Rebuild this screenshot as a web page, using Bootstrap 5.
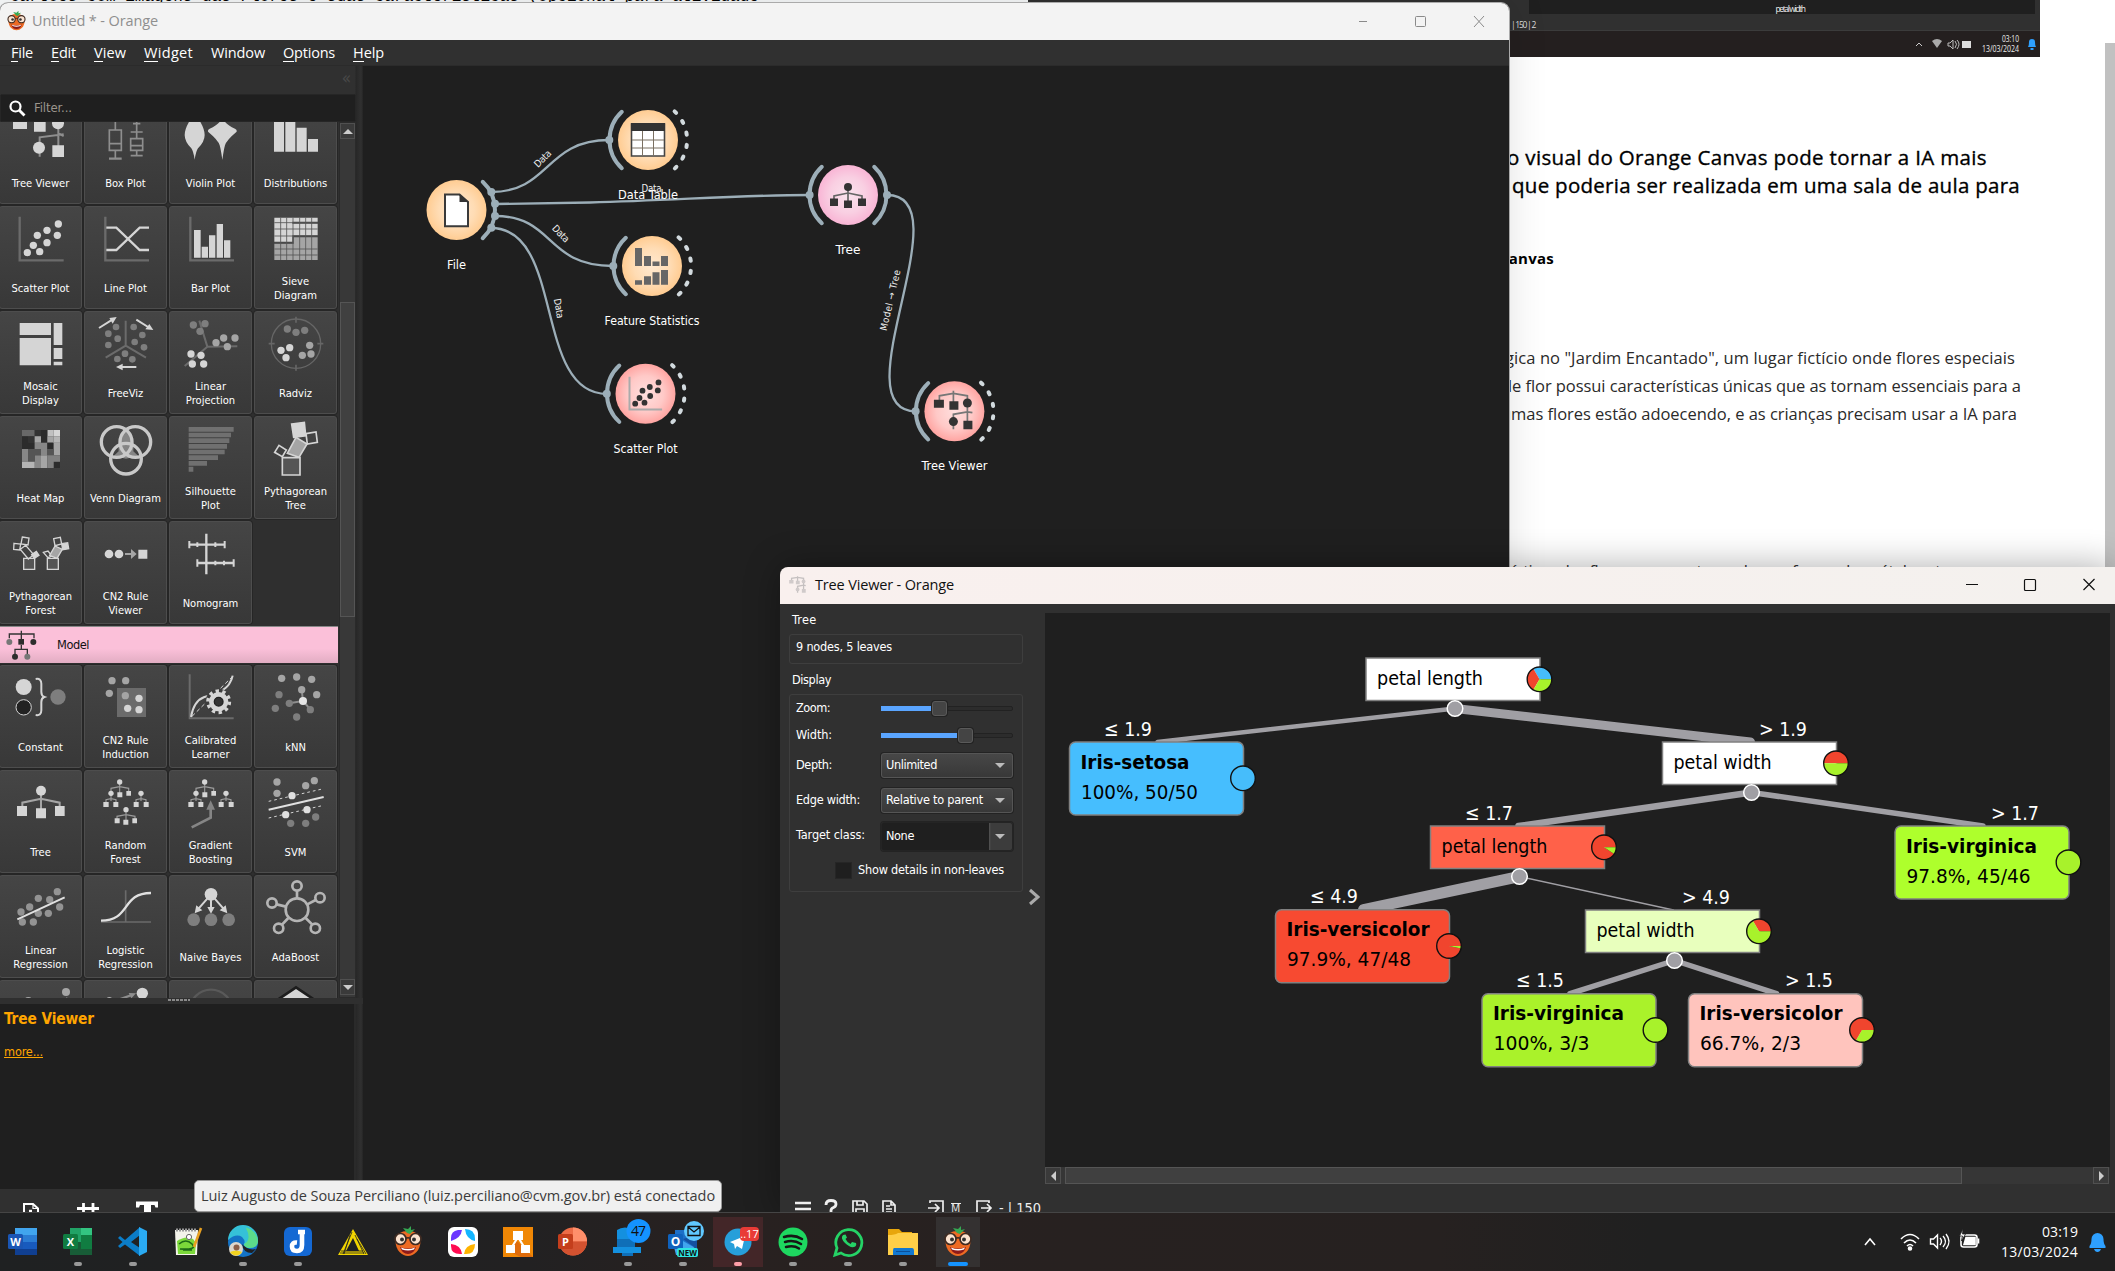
<!DOCTYPE html>
<html lang="pt-BR">
<head>
<meta charset="utf-8">
<meta name="viewport" content="width=device-width, initial-scale=1">
<title>Orange</title>
<link href="https://cdn.jsdelivr.net/npm/bootstrap@5.3.0/dist/css/bootstrap.min.css" rel="stylesheet">
<style>
:root{--tah:"DejaVu Sans Condensed","DejaVu Sans",sans-serif;--seg:"Open Sans","Noto Sans",sans-serif}
html,body{height:1271px;width:2115px;overflow:hidden}
body{background:#fff;font-family:var(--tah);font-size:12px;color:#fff;font-stretch:condensed;position:relative}
svg{display:block;flex:none}
[data-fit]{white-space:nowrap;display:inline-block}
/* document behind the windows */
.doc-page{height:1271px;color:#111;font-family:var(--seg);font-stretch:normal;position:relative}
.doc-top{height:57px}
.doc-left{width:1028px;height:57px;background:#f7f9fa;font:16px/16px "Liberation Mono",monospace;color:#000;padding:0 0 0 10px}
.doc-left span{display:block;margin-top:-11px;white-space:pre}
.doc-shot{width:1012px;background:#241f1f;font-size:8.500px;position:relative;color:#ddd}
.doc-shot .pane{height:31px;background:#303030;border-bottom:1px solid #3b3b3b;position:relative}
.doc-shot .pane i{display:block;height:14px;width:506px;margin-left:501px;background:#1f1f1f;text-align:center;font-style:normal;line-height:17px;color:#eee;padding-left:16px}
.doc-shot .pane i span{line-height:17px}
.doc-text{padding-left:1499px}
.doc-text div{line-height:28px;white-space:nowrap}
.doc-h{margin-top:86px;font-size:20.5px;font-weight:500;color:#000;-webkit-text-stroke:.35px #000}
.doc-b{margin-top:45px;font-size:15px;font-weight:700;color:#000}
.doc-p{margin-top:72px;font-size:16.5px;font-weight:400;color:#2a2a2a}
.doc-l{margin-top:129px;font-size:16.5px;font-weight:400;color:#333}
.doc-scroll{position:absolute;right:0;top:43px;width:10px;height:524px;background:#c1c1c1}
/* windows */
.win-main{position:absolute;left:0;top:3px;width:1509px;height:1209px;background:#303030;border-radius:8px 8px 0 0;overflow:hidden;box-shadow:0 0 0 1px #aaa,0 0 40px rgba(0,0,0,.12)}
.win-title{height:37px;background:#f3f3f3;color:#8f8f8f;font-family:var(--seg);font-size:14.5px;font-stretch:normal}
.win-menu{height:26px;background:#303030;font-family:var(--seg);font-size:14.5px;font-stretch:normal;line-height:25px;border-bottom:1px solid #2b2b2b}
.win-menu u{text-decoration:none;box-shadow:inset 0 -1px 0 #fff;display:inline-block;line-height:18px}
.side{width:363px;background:linear-gradient(90deg,#303030 355px,#272727 356px,#303030 361px,#252525)}
.side-head{height:28px;color:#484848;font-size:17px}
.side-filter{height:28px;width:356px;background:#1f1f1f;border:1px solid #262626;border-radius:2px;color:#9b958c;font-size:13px}
.tilewrap{height:876px;width:338px;overflow:hidden;background:#2f2f2f}
.tiles{display:flex;flex-wrap:wrap;gap:2px;width:340px;margin-left:-1px}
.tile{width:83px;height:103px;border:1px solid #4d4d4d;border-radius:3px;background:linear-gradient(#454545,#383838);box-shadow:0 0 0 1px #262626;overflow:hidden}
.tile svg{width:83px;height:62px;margin:-1px 0 0 -1px}
.tile p{margin:0;height:41px;display:flex;align-items:center;justify-content:center;text-align:center;line-height:14px;font-size:11.1px;color:#fff;white-space:pre-line}
.cat{height:37px;background:linear-gradient(#fbc0d9 60%,#e2adc3);border-top:1px solid #888;color:#111;font-size:12.7px;margin:2px 0 2px}
.vbar{width:17px;margin-left:1px;background:#383838;border:1px solid #2a2a2a}
.vbtn{height:16px;border:1px solid #505050;background:#3a3a3a;display:flex;align-items:center;justify-content:center}
.vthumb{margin-top:163px;height:315px;border:1px solid #555;background:#404040}
.split6{height:6px;background:#2f2f2f}
.descr{height:185px;width:356px;background:#1f1f1f;border-right:2px solid #2a2a2a;color:#ffa500;padding:5px 4px;}
.descr b{display:block;font-size:15.3px;line-height:20px}
.descr a{display:block;font-size:12.6px;margin-top:13px;color:#ffa500;line-height:19px}
.descr a span{text-decoration:underline}
.side-tools{height:23px;overflow:hidden;background:#303030}
.canvas-area{background:#1f1f1f;width:1146px;height:1146px}
.win-tree{position:absolute;left:780px;top:567px;width:1335px;height:645px;background:#303030;border-radius:8px 0 0 0;overflow:hidden;}
.tree-shadow{position:absolute;left:780px;top:567px;width:1335px;height:645px;border-radius:8px 8px 0 0;box-shadow:0 0 36px rgba(0,0,0,.33)}
.win-tree .win-title{background:linear-gradient(90deg,#f9f0ee,#f4f1ee);color:#111}
.ctl{width:265px;padding:9px 0 0 9px;font-size:12.6px;position:relative}
.ctl .lbl{line-height:21px;padding-left:3px}
.gbox{width:234px;border:1px solid #3e3e3e;border-radius:3px;padding-left:6px}
.frow{display:flex;align-items:center}
.frow>span{width:85px;white-space:nowrap}
.sldr{width:132px;height:16px;display:flex;align-items:center}
.sldr i{height:5px;background:#5aa5ff}
.sldr b{width:15px;height:15px;border:1px solid #5a5a5a;background:#444;border-radius:3px;box-shadow:0 0 0 1px #222}
.sldr em{flex:1;height:5px;background:#2c2c2c;border:1px solid #222;border-radius:2px}
.cmb{width:132px;border:1px solid #555;border-radius:3px;background:linear-gradient(#474747,#383838);box-shadow:0 0 0 1px #232323;display:flex;align-items:center;justify-content:space-between;padding:0 7px 1px 4px}
.tri{width:0;height:0;border:5px solid transparent;border-top:5px solid #bbb;border-bottom:0}
.chk{width:17px;height:17px;background:#1f1f1f;border:1px solid #262626}
.hbar{height:17px;background:#363636;display:flex;width:1064px}
.hbar .hb{width:16px;border:1px solid #505050;background:#3a3a3a;display:flex;align-items:center;justify-content:center}
.hthumb{width:897px;margin-left:4px;border:1px solid #555;background:#404040}
.tray-tip{position:absolute;left:194px;top:1180px;width:528px;height:32px;background:#f0f0f0;border:1px solid #999;border-radius:5px;color:#3b3b3b;font:400 14.5px/29px var(--seg);padding-left:6px}
/* taskbar */
.tbar{position:absolute;left:0;top:1212px;width:2115px;height:59px;background:linear-gradient(90deg,#1f2122,#222122 25%,#282120 34%,#262120 68%,#202020 78%,#202020);border-top:1px solid #454545;font-family:var(--seg);font-stretch:normal}
.tcell{width:55px;height:58px;display:flex;flex-direction:column;align-items:center;padding-top:4px;position:relative}
.tcell>svg{width:50px;height:50px}
.tcell::after{content:"";position:absolute;top:49px;width:8px;height:4px;border-radius:2px;background:#999;display:none}
.tcell.on::after{display:block}
.tcell.red{background:linear-gradient(#432628,#432628) center 4px/50px 50px no-repeat}
.tcell.red::after{background:#ff9fa8}
.tcell.act{background:linear-gradient(#343131,#343131) center 4px/44px 50px no-repeat}
.tcell.act::after{width:20px;background:#1593ff}
.clock{font-size:14px;line-height:20px;text-align:right}
</style>
</head>
<body>

<div class="doc-page">
  <div class="doc-top d-flex">
    <div class="doc-left"><span>Cartões com imagens das Flores e suas características (opcional para atividade</span></div>
    <div class="doc-shot">
      <div class="pane"><i><span data-fit="29">petal width</span></i><div style="padding-left:483px;line-height:22px"><span data-fit="24">| 150 | 2</span></div></div>
      <div class="d-flex justify-content-end align-items-center" style="height:26px;padding-right:4px;gap:5px;line-height:9.5px">
        <svg width="111" height="24" viewBox="-3 -2 111 24"><path d="M1 12l3-3 3 3" fill="none" stroke="#ccc"/><path d="M17 7q5-4 10 0l-5 7z" fill="#aaa"/><path d="M33 9h2l3-3v9l-3-3h-2zM40 7q3 3 0 7M42 6q4 4 0 9" fill="none" stroke="#bbb"/><rect x="47" y="7" width="9" height="7" fill="#ddd"/><text x="104" y="8" font-size="8.500" fill="#eee" text-anchor="end" textLength="17" lengthAdjust="spacingAndGlyphs">03:10</text><text x="104" y="18" font-size="8.500" fill="#eee" text-anchor="end" textLength="37" lengthAdjust="spacingAndGlyphs">13/03/2024</text></svg>
        <svg width="8" height="12" viewBox="0 0 8 12"><path d="M0 9q1-1 1-5a3 3 0 016 0q0 4 1 5zM2.500 10h3v2h-3z" fill="#2ea0ff"/></svg>
      </div>
    </div>
  </div>
  <div class="doc-text">
    <div class="doc-h"><span data-fit="480" class="ms-2">o visual do Orange Canvas pode tornar a IA mais</span><br><span data-fit="508" style="margin-left:13px">que poderia ser realizada em uma sala de aula para</span></div>
    <div class="doc-b"><span data-fit="55">Canvas</span></div>
    <div class="doc-p"><span data-fit="510" style="margin-left:6px">gica no "Jardim Encantado", um lugar fictício onde flores especiais</span><br><span data-fit="519" style="margin-left:3px">de flor possui características únicas que as tornam essenciais para a</span><br><span data-fit="516" style="margin-left:2px">umas flores estão adoecendo, e as crianças precisam usar a IA para</span></div>
    <div class="doc-l"><span data-fit="440" style="margin-left:13px">ísticas das flores, como o tamanho e a forma das pétalas etc.</span></div>
  </div>
  <div class="doc-scroll"></div>
</div>

<!-- Orange main window -->
<div class="win-main">
  <div class="win-title d-flex align-items-center">
    <svg width="21" height="21" viewBox="9 8 32 32" style="margin:-2px 0 0 6px"><use href="#orange"/></svg>
    <span data-fit="126" style="margin:-2px 0 0 5px">Untitled * - Orange</span>
    <svg class="ms-auto" width="150" height="20" viewBox="0 0 150 20" style="margin-top:-2px" fill="none" stroke="#8a8a8a"><path d="M-3 10.500h11M115 5l10 11M125 5l-10 11"/><rect x="56.500" y="5.500" width="10" height="10" rx="1"/></svg>
  </div>
  <div class="win-menu d-flex">
    <span data-fit="22" style="margin-left:11px"><u>F</u>ile</span><span data-fit="25" style="margin-left:18px"><u>E</u>dit</span><span data-fit="32" style="margin-left:18px"><u>V</u>iew</span><span data-fit="49" style="margin-left:18px"><u>W</u>idget</span><span data-fit="54" style="margin-left:18px">Window</span><span data-fit="52" style="margin-left:18px"><u>O</u>ptions</span><span data-fit="31" style="margin-left:18px"><u>H</u>elp</span>
  </div>
  <div class="d-flex">
    <div class="side">
      <div class="side-head d-flex justify-content-end" style="padding-right:12px">«</div>
      <div class="side-filter d-flex align-items-center">
        <svg width="17" height="17" viewBox="0 0 17 17" style="margin-left:8px"><circle cx="6.500" cy="6.500" r="5" fill="none" stroke="#fff" stroke-width="2.200"/><path d="M10 10l5.500 5.500" stroke="#fff" stroke-width="2.800"/></svg>
        <span data-fit="38" style="margin-left:8px">Filter...</span>
      </div>
      <div class="d-flex">
      <div class="tilewrap">
        <div class="tiles" style="margin-top:-21px">
          <div class="tile"><svg viewBox="-3 303 249 186" fill="#d5d5d5"><g fill="none" stroke="#8e8e8e" stroke-width="6"><path d="M175 380v60M119 470v-58l72-9M175 400l16 8"/></g><path d="M39 350h42v37H39zM102 355h35v40h-35zM157 436h35v35h-35z"/><circle cx="174" cy="370" r="18"/><circle cx="117" cy="443" r="18"/></svg><p>Tree Viewer</p></div>
          <div class="tile"><svg viewBox="252 303 249 186" fill="none" stroke="#8e8e8e" stroke-width="5"><path d="M346 350v40M346 452v24M410 365v50M410 452v16M399 371h22"/><path d="M328 390h36v61h-36zM328 431h36M392 416h36v35h-36zM392 437h36M392 396h36M392 467h36" /><path d="M327 476h38" stroke-width="7"/></svg><p>Box Plot</p></div>
          <div class="tile"><svg viewBox="507 303 249 186" fill="#d5d5d5"><path d="M584 340q30 40 30 65 0 20-20 40-6 8-10 34-4-26-10-34-20-20-20-40 0-25 30-65zM667 350q5 22 38 36 8 5 4 10-30 25-34 40-4 14-8 44-4-30-8-44-4-15-34-40-4-5 4-10 33-14 38-36z"/></svg><p>Violin Plot</p></div>
          <div class="tile"><svg viewBox="762 303 249 186" fill="#d5d5d5"><path d="M822 340h30v115h-30zM856 350h30v105h-30zM890 383h30v72h-30zM924 417h30v38h-30z"/></svg><p>Distributions</p></div>

          <div class="tile"><svg viewBox="-3 618 249 186"><path d="M59 650v131h132" fill="none" stroke="#6b6b6b" stroke-width="7"/><g fill="#d5d5d5"><circle cx="175" cy="672" r="11"/><circle cx="141" cy="691" r="11"/><circle cx="112" cy="706" r="11"/><circle cx="172" cy="706" r="11"/><circle cx="141" cy="728" r="11"/><circle cx="100" cy="736" r="11"/><circle cx="119" cy="755" r="11"/><circle cx="82" cy="758" r="11"/></g></svg><p>Scatter Plot</p></div>
          <div class="tile"><svg viewBox="252 618 249 186" fill="none" stroke-width="7"><path d="M316 650v131h131" stroke="#6b6b6b"/><path d="M319 683h30l70 67h28M319 750h30l70-67h28" stroke="#d5d5d5"/></svg><p>Line Plot</p></div>
          <div class="tile"><svg viewBox="507 618 249 186"><path d="M571 650v131h131" stroke="#6b6b6b" stroke-width="7" fill="none"/><path fill="#d5d5d5" d="M582 690h20v83h-20zM605 740h19v33h-19zM627 706h19v67h-19zM650 672h19v101h-19zM672 721h19v52h-19z"/></svg><p>Bar Plot</p></div>
          <div class="tile"><svg viewBox="762 618 249 186"><path fill="#d5d5d5" d="M823 653h130v12H823zM823 671h130v35H823zM823 665h54v60h-54z"/><path fill="#a5a5a5" d="M881 712h72v68h-72zM823 731h58v49h-58z"/><path d="M842 653v127M860 653v127M879 653v127M899 653v127M917 653v127M935 653v127M823 668h130M823 687h130M823 708h130M823 729h58M823 747h130M823 765h130" stroke="#555" stroke-width="2.500"/></svg><p>Sieve
Diagram</p></div>

          <div class="tile"><svg viewBox="-3 933 249 186" fill="#d5d5d5"><path d="M59 969h94v36H59zM161 969h26v66h-26zM59 1014h94v82H59zM161 1044h26v33h-26zM161 1085h26v11h-26z"/></svg><p>Mosaic
Display</p></div>
          <div class="tile"><svg viewBox="252 933 249 186"><path d="M377 962v75l-60 36M377 1037l61 36" fill="none" stroke="#6b6b6b" stroke-width="6"/><g fill="#7e7e7e"><circle cx="348" cy="981" r="10"/><circle cx="325" cy="1001" r="10"/><circle cx="353" cy="1016" r="10"/><circle cx="325" cy="1035" r="10"/><circle cx="401" cy="981" r="10"/><circle cx="427" cy="1005" r="10"/><circle cx="404" cy="1026" r="10"/><circle cx="432" cy="1042" r="10"/><circle cx="375" cy="1061" r="10"/><circle cx="352" cy="1077" r="10"/><circle cx="397" cy="1078" r="10"/></g><path d="M297 984l40-25M409 959l40 25M409 1101h-45" stroke="#d5d5d5" stroke-width="6"/><path fill="#d5d5d5" d="M350 951l-12 20-10-17zM460 990l-24-2 12-16zM348 1101l20-10v20z"/></svg><p>FreeViz</p></div>
          <div class="tile"><svg viewBox="507 933 249 186"><path d="M598 962l24 78 90-1M622 1040l-68 58" fill="none" stroke="#6b6b6b" stroke-width="6"/><g fill="#7e7e7e"><circle cx="580" cy="975" r="11"/><circle cx="615" cy="971" r="11"/><circle cx="600" cy="994" r="11"/></g><g fill="#a5a5a5"><circle cx="671" cy="1014" r="11"/><circle cx="705" cy="1014" r="11"/><circle cx="648" cy="1028" r="11"/><circle cx="682" cy="1040" r="11"/></g><g fill="#d5d5d5"><circle cx="573" cy="1062" r="11"/><circle cx="603" cy="1066" r="11"/><circle cx="577" cy="1092" r="11"/><circle cx="611" cy="1092" r="11"/></g></svg><p>Linear
Projection</p></div>
          <div class="tile"><svg viewBox="762 933 249 186"><g fill="none" stroke="#666" stroke-width="4"><circle cx="888" cy="1031" r="74"/><path d="M888 950v18M888 1094v18M806 1031h18M952 1031h18" stroke-width="5"/></g><g fill="#7e7e7e"><circle cx="862" cy="987" r="11"/><circle cx="888" cy="997" r="11"/><circle cx="914" cy="991" r="11"/></g><g fill="#a5a5a5"><circle cx="929" cy="1036" r="11"/><circle cx="933" cy="1062" r="11"/><circle cx="907" cy="1066" r="11"/></g><g fill="#d5d5d5"><circle cx="869" cy="1043" r="11"/><circle cx="843" cy="1051" r="11"/><circle cx="858" cy="1073" r="11"/></g></svg><p>Radviz</p></div>

          <div class="tile"><svg viewBox="-3 18 249 186"><path d="M66 60h38v19H66z" fill="#686868"/><path d="M104 60h19v19h-19zM85 79h19v19H85z" fill="#333"/><path d="M142 60h19v19h-19z" fill="#c0c0c0"/><path d="M161 60h19v19h-19z" fill="#d5d5d5"/><path d="M66 79h19v38H66zM123 60h19v19h-19zM123 79h19v19h-19zM85 98h19v19H85zM161 155h19v19h-19z" fill="#2c2c2c"/><path d="M104 79h19v19h-19zM142 79h19v19h-19zM161 98h19v38h-19zM123 136h19v38h-19z" fill="#a5a5a5"/><path d="M104 98h38v19h-38zM66 117h19v38H66zM123 117h19v19h-19zM104 136h19v38h-19z" fill="#878787"/><path d="M85 117h38v19H85zM142 98h19v38h-19zM85 136h19v19H85z" fill="#555"/><path d="M85 155h19v19H85zM161 79h19v19h-19zM66 155h19v19H66z" fill="#b5b5b5"/><path d="M142 136h19v38h-19zM161 136h19v19h-19z" fill="#808080"/><path d="M142 98h17v19h-17z" fill="#2a2a2a"/></svg><p>Heat Map</p></div>
          <div class="tile"><svg viewBox="252 18 249 186"><path d="M378 54q28 32 22 70l15 14-37 8-37-8 15-14q-6-40 22-70z" fill="#858585"/><g fill="none" stroke="#c9c9c9" stroke-width="10"><circle cx="350" cy="96" r="46"/><circle cx="406" cy="96" r="46"/><circle cx="378" cy="146" r="46"/></g></svg><p>Venn Diagram</p></div>
          <div class="tile"><svg viewBox="507 18 249 186" fill="#707070"><path d="M566 51h135v14H566zM566 68h127v14H566zM566 85h122v14H566zM566 102h115v14H566zM566 119h108v14H566zM566 136h88v14h-88zM566 153h55v14h-55zM566 170h14v15h-14z"/></svg><p>Silhouette
Plot</p></div>
          <div class="tile"><svg viewBox="762 18 249 186" stroke="#d5d5d5" stroke-width="5" fill="none"><path fill="#555" d="M847 143h53v52h-53z"/><path fill="#a5a5a5" d="M862 130l26-48 33 20-24 40z"/><path fill="#d5d5d5" d="M875 42l38-5 4 40-36 5z"/><path d="M918 71l30-5 4 31-30 5zM837 106l22 14-12 20-23-13z"/></svg><p>Pythagorean
Tree</p></div>

          <div class="tile"><svg viewBox="-3 333 249 186" stroke="#d5d5d5" stroke-width="4" fill="none"><path fill="#555" d="M71 445h33v33H71zM142 445h33v33h-33z"/><path d="M61 418l16-12 24 28-16 13zM67 381l20 3-3 21-21-3zM42 400l20 2-3 18-18-2zM130 427l14-4 12 15-12 5z"/><path fill="#d5d5d5" d="M95 434l14-10 8 12-14 9zM185 401l18-3 3 18-18 3z"/><path fill="#a5a5a5" d="M149 436l16-28 22 10-16 27z"/><path d="M161 386l20-4 4 20-20 5z"/></svg><p>Pythagorean
Forest</p></div>
          <div class="tile"><svg viewBox="252 333 249 186"><g fill="#d5d5d5"><circle cx="327" cy="432" r="13"/><circle cx="357" cy="432" r="13"/><path d="M415 419h27v27h-27z"/></g><path d="M375 429h18v-12l17 15-17 15v-12h-18z" fill="#a5a5a5"/></svg><p>CN2 Rule
Viewer</p></div>
          <div class="tile"><svg viewBox="507 333 249 186" stroke="#d5d5d5" stroke-width="7" fill="none"><path d="M619 371v122M568 404h106M592 459h109"/><path d="M568 393v22M674 393v22M592 448v22M701 448v22M592 397v14M646 397v14M646 452v14M672 452v14" stroke-width="6"/></svg><p>Nomogram</p></div>
        </div>
        <div class="cat d-flex align-items-center">
          <svg width="32" height="32" viewBox="16 652 96 96" style="margin-left:5px"><path d="M29 680v-13h74v13M65 657v25M65 700v13M46 728v-15h37v15" fill="none" stroke="#333" stroke-width="4"/><g fill="#2d2d2d"><path d="M56 682h17v17H56z"/><circle cx="101" cy="691" r="9"/><circle cx="46" cy="735" r="9"/></g><g fill="#777"><circle cx="29" cy="691" r="9"/><circle cx="83" cy="735" r="9"/></g></svg>
          <span data-fit="32" style="margin-left:20px">Model</span>
        </div>
        <div class="tiles">
          <div class="tile"><svg viewBox="-3 762 249 186"><circle cx="71" cy="828" r="24" fill="#d5d5d5"/><circle cx="71" cy="889" r="23" fill="#222" stroke="#d5d5d5" stroke-width="3"/><circle cx="174" cy="858" r="23" fill="#7e7e7e"/><path d="M107 804q17-3 17 14v25q0 12 9 15-9 3-9 15v25q0 17-17 14" fill="none" stroke="#d5d5d5" stroke-width="6"/></svg><p>Constant</p></div>
          <div class="tile"><svg viewBox="252 762 249 186"><path fill="#6b6b6b" d="M351 831h87v87h-87z"/><g fill="#a5a5a5"><circle cx="336" cy="809" r="11"/><circle cx="377" cy="809" r="11"/><circle cx="328" cy="847" r="11"/><circle cx="376" cy="854" r="11"/></g><g fill="#d5d5d5"><circle cx="417" cy="862" r="11"/><circle cx="383" cy="892" r="11"/><circle cx="417" cy="896" r="11"/></g></svg><p>CN2 Rule
Induction</p></div>
          <div class="tile"><svg viewBox="507 762 249 186" fill="none"><path d="M569 790v132h132" stroke="#6b6b6b" stroke-width="6"/><path d="M573 918q8-48 40-60 60-15 75-40 8-12 10-24" stroke="#d5d5d5" stroke-width="6"/><path d="M576 916l122-120" stroke="#d5d5d5" stroke-width="3" stroke-dasharray="12 8"/><circle cx="656" cy="872" r="39" fill="#3c3c3c"/><circle cx="656" cy="872" r="29" fill="#d5d5d5"/><circle cx="656" cy="872" r="32" stroke="#d5d5d5" stroke-width="11" stroke-dasharray="10 10.100"/><circle cx="656" cy="872" r="13" fill="#333" stroke="#222" stroke-width="4"/></svg><p>Calibrated
Learner</p></div>
          <div class="tile"><svg viewBox="762 762 249 186"><path d="M868 877l41-7-4-34M909 870l22 25" fill="none" stroke="#8e8e8e" stroke-width="6"/><g fill="#a5a5a5"><circle cx="845" cy="802" r="11"/><circle cx="890" cy="798" r="11"/><circle cx="935" cy="805" r="11"/><circle cx="905" cy="836" r="11"/><circle cx="950" cy="851" r="11"/></g><g fill="#7e7e7e"><circle cx="837" cy="851" r="11"/><circle cx="868" cy="877" r="11"/><circle cx="826" cy="892" r="11"/><circle cx="931" cy="896" r="11"/><circle cx="890" cy="918" r="11"/></g><circle cx="909" cy="870" r="12" fill="#e5e5e5"/></svg><p>kNN</p></div>

          <div class="tile"><svg viewBox="-3 1077 249 186"><path d="M67 1188v-13l56-12 56 12v13M123 1145v50" fill="none" stroke="#a5a5a5" stroke-width="6"/><g fill="#d5d5d5"><circle cx="123" cy="1139" r="15"/><path d="M51 1185h30v30H51zM108 1192h30v30h-30zM165 1185h29v30h-29z"/></g></svg><p>Tree</p></div>
          <div class="tile"><svg viewBox="252 1077 249 186"><g id="minitree"><path d="M359 1115v36M333 1143v-11l26-5 27 5v11M333 1150v20M318 1176v-10l15-3 15 3v10M423 1150v20M408 1176v-10l15-3 15 3v10" fill="none" stroke="#999" stroke-width="3.500"/><g fill="#d5d5d5"><circle cx="359" cy="1113" r="8"/><circle cx="333" cy="1147" r="8"/><circle cx="423" cy="1147" r="8"/><path d="M352 1144h15v15h-15zM379 1140h14v14h-14zM310 1173h16v15h-16zM340 1173h15v15h-15zM401 1173h15v15h-15zM431 1173h15v15h-15z"/></g></g><path d="M378 1200v28M351 1224v-8l27-5 27 5v8" fill="none" stroke="#999" stroke-width="3.500"/><g fill="#d5d5d5"><circle cx="378" cy="1196" r="8"/><path d="M344 1222h15v15h-15zM370 1226h15v15h-15zM397 1222h14v15h-14z"/></g></svg><p>Random
Forest</p></div>
          <div class="tile"><svg viewBox="507 1077 249 186"><use href="#minitree" x="255"/><path d="M575 1249l57-29v-30" fill="none" stroke="#858585" stroke-width="8"/><path d="M632 1168l13 28h-26z" fill="#858585"/></svg><p>Gradient
Boosting</p></div>
          <div class="tile"><svg viewBox="762 1077 249 186"><path d="M806 1196l165-38" stroke="#e0e0e0" stroke-width="6"/><path d="M806 1171l165-38M806 1221l165-38" stroke="#d5d5d5" stroke-width="3" stroke-dasharray="8 9"/><g fill="#a5a5a5"><circle cx="831" cy="1113" r="11"/><circle cx="831" cy="1147" r="11"/><circle cx="917" cy="1124" r="11"/><circle cx="943" cy="1109" r="11"/></g><g fill="#7e7e7e"><circle cx="872" cy="1237" r="11"/><circle cx="917" cy="1237" r="11"/><circle cx="947" cy="1218" r="11"/></g><g fill="#e0e0e0"><circle cx="876" cy="1154" r="11"/><circle cx="857" cy="1211" r="11"/><circle cx="921" cy="1196" r="11"/></g></svg><p>SVM</p></div>

          <div class="tile"><svg viewBox="-3 162 249 186"><g fill="#939393"><circle cx="172" cy="212" r="11"/><circle cx="115" cy="232" r="11"/><circle cx="149" cy="236" r="11"/><circle cx="89" cy="258" r="11"/><circle cx="179" cy="258" r="11"/><circle cx="63" cy="273" r="11"/><circle cx="115" cy="277" r="11"/><circle cx="145" cy="277" r="11"/><circle cx="67" cy="303" r="11"/><circle cx="100" cy="303" r="11"/></g><path d="M52 295l142-66" stroke="#e0e0e0" stroke-width="6"/></svg><p>Linear
Regression</p></div>
          <div class="tile"><svg viewBox="252 162 249 186" fill="none"><path d="M377 208v95M303 303h150" stroke="#6b6b6b" stroke-width="5"/><path d="M303 299c90 0 60-83 150-83" stroke="#e0e0e0" stroke-width="7"/></svg><p>Logistic
Regression</p></div>
          <div class="tile"><svg viewBox="507 162 249 186"><path d="M633 220l-40 46M633 220v44M633 220l40 46" stroke="#d5d5d5" stroke-width="6"/><g fill="#d5d5d5"><circle cx="633" cy="220" r="19"/><path d="M584 277l5-24 18 15zM633 278l-11-20h22zM682 277l-5-24-18 15z" transform="rotate(0)"/></g><g fill="#7e7e7e"><circle cx="581" cy="296" r="19"/><circle cx="633" cy="296" r="19"/><circle cx="686" cy="296" r="19"/></g></svg><p>Naive Bayes</p></div>
          <div class="tile"><svg viewBox="762 162 249 186" fill="none" stroke="#b5b5b5" stroke-width="8"><circle cx="891" cy="266" r="34"/><circle cx="891" cy="195" r="14"/><circle cx="960" cy="230" r="14"/><circle cx="816" cy="246" r="14"/><circle cx="836" cy="322" r="14"/><circle cx="946" cy="322" r="14"/><path d="M891 209v23M947 237l-25 13M830 250l28 7M846 311l19-20M937 311l-20-20"/></svg><p>AdaBoost</p></div>

          <div class="tile"><svg viewBox="-3 477 249 186"><circle cx="198" cy="513" r="12" fill="#a5a5a5"/><circle cx="85" cy="540" r="12" fill="#a5a5a5"/><path d="M200 530v10" stroke="#ddd" stroke-width="4"/></svg></div>
          <div class="tile"><svg viewBox="252 477 249 186"><circle cx="328" cy="541" r="12" fill="#d5d5d5"/><path d="M345 540l50-18" stroke="#8e8e8e" stroke-width="7"/><path d="M408 517l-22-1 8 16z" fill="#8e8e8e"/><circle cx="427" cy="517" r="17" fill="#d5d5d5"/></svg></div>
          <div class="tile"><svg viewBox="507 477 249 186"><circle cx="633" cy="570" r="64" fill="none" stroke="#595959" stroke-width="7"/></svg></div>
          <div class="tile"><svg viewBox="762 477 249 186"><path d="M820 545l68-46 68 46" fill="#d5d5d5" stroke="#1d1d1d" stroke-width="8"/></svg></div>
        </div>
      </div>
      <div class="vbar">
        <div class="vbtn"><svg width="10" height="5"><path d="M0 5l5-5 5 5z" fill="#ccc"/></svg></div>
        <div class="vthumb"></div>
        <div class="vbtn" style="margin-top:362px"><svg width="10" height="5"><path d="M0 0h10l-5 5z" fill="#ccc"/></svg></div>
      </div>
      </div>
      <div class="split6"><svg width="22" height="4" viewBox="0 0 22 4" style="margin-left:168px"><path d="M0 2h22" stroke="#8a8a8a" stroke-width="2" stroke-dasharray="3 1"/></svg></div>
      <div class="descr"><b><span data-fit="90">Tree Viewer</span></b><a><span data-fit="39">more...</span></a></div>
      <div class="side-tools"><svg width="193" height="23" viewBox="0 1189 193 23" fill="none" stroke="#fff"><path d="M24 1213v-9h9l5 4.500v4.500" stroke-width="2"/><path d="M33 1204v4.500h5" stroke-width="1.200"/><path d="M29 1211h3" stroke-width="2.400"/><path d="M77 1208.500h22M83.500 1203v9M93 1203v9" stroke-width="2.800"/><path d="M136 1201.500h22v6h-2.500l-1-2.500H151v8h-7v-8h-4l-1 2.500h-3z" fill="#fff" stroke="none"/></svg></div>
    </div>

    <svg class="canvas-area" viewBox="363 66 1146 1146" font-family="DejaVu Sans Condensed, DejaVu Sans, sans-serif" font-stretch="condensed">
      <defs>
        <radialGradient id="go"><stop offset="0" stop-color="#ffe9d0"/><stop offset=".6" stop-color="#ffdcb4"/><stop offset="1" stop-color="#ffcc92"/></radialGradient>
        <radialGradient id="gp"><stop offset="0" stop-color="#fae3ed"/><stop offset=".6" stop-color="#f9cfe2"/><stop offset="1" stop-color="#f9b5d5"/></radialGradient>
        <radialGradient id="gr"><stop offset="0" stop-color="#ffdfde"/><stop offset=".6" stop-color="#ffc9c7"/><stop offset="1" stop-color="#ffa5a2"/></radialGradient>
        <path id="arcl" d="M-26.200-28.200A38.500 38.500 0 00-26.200 28.200" fill="none" stroke="#9caeb8" stroke-width="4" stroke-linecap="round"/>
        <path id="arcr" d="M26.200-28.200A38.500 38.500 0 0126.200 28.200" fill="none" stroke="#9caeb8" stroke-width="4" stroke-linecap="round"/>
        <path id="dash" d="M26.600-28.600A39 39 0 0126.600 28.600" fill="none" stroke="#d2dade" stroke-width="4" stroke-linecap="round" stroke-dasharray="2.200 10.100"/>
      </defs>
      <g fill="none" stroke="#9caeb8" stroke-width="2.300">
        <path d="M491 192C550 192 545 140 609 140M495 204L590 202.500C680 200 740 195 810 195M495 216C555 216 545 266 613 266M491 228C565 228 533 394 607 394M887 195C965 195 838 411.300 916 411.300"/>
      </g>
      <g fill="#9caeb8"><circle cx="491.300" cy="192" r="4"/><circle cx="495" cy="203.700" r="4"/><circle cx="495" cy="216" r="4"/><circle cx="491.300" cy="227.700" r="4"/><circle cx="609.300" cy="140" r="4"/><circle cx="613.300" cy="266" r="4"/><circle cx="606.800" cy="393.700" r="4"/><circle cx="809.600" cy="195" r="4"/><circle cx="887" cy="195" r="4"/><circle cx="915.600" cy="411.300" r="4"/></g>
      <g transform="translate(456.500 210)"><use href="#arcr"/><circle r="30" fill="url(#go)"/><path d="M-11.500-15.500H3L11.500-8V16.300H-11.500z" fill="#fff" stroke="#3a3a3a" stroke-width="2"/><path d="M3-16v8h9z" fill="#333"/></g>
      <g transform="translate(648 140)"><use href="#arcl"/><use href="#dash"/><circle r="30" fill="url(#go)"/><path d="M-16.500-16h33v32h-33z" fill="#fff" stroke="#444" stroke-width="1.600"/><path d="M-17-17h34v8h-34z" fill="#333"/><path d="M-5.500-9V16M5.500-9V16M-16 0h32M-16 8h32" stroke="#7b7062"/></g>
      <g transform="translate(652 266)"><use href="#arcl"/><use href="#dash"/><circle r="30" fill="url(#go)"/><path fill="#666" d="M-17-18h7V0h-7zM-8-10h7V0h-7zM.500-4.500h7V0h-7zM9-10h7V0H9zM-17 14.300h7v4.400h-7zM-8 10.300h7v8.400h-7zM.500 6.300h7v12.400h-7zM9 4h7v14.700H9z"/></g>
      <g transform="translate(645.500 393.700)"><use href="#arcl"/><use href="#dash"/><circle r="30" fill="url(#gr)"/><path d="M-16-17V15.700H16.600" fill="none" stroke="#aaa" stroke-width="2"/><g fill="#333"><circle cx="-10.300" cy="10" r="2.900"/><circle cx="-6" cy="4.300" r="2.900"/><circle cx="-1" cy="9" r="2.900"/><circle cx="-3" cy="-3" r="2.900"/><circle cx="4.700" cy="2.300" r="2.900"/><circle cx="4.300" cy="-6.700" r="2.900"/><circle cx="12.300" cy="-3.300" r="2.900"/><circle cx="13" cy="-11.300" r="2.900"/></g></g>
      <g transform="translate(848 195)"><use href="#arcl"/><use href="#arcr"/><circle r="30" fill="url(#gp)"/><path d="M-14 5V1L0-2 14 1V5M0-5V6" fill="none" stroke="#666" stroke-width="1.700"/><g fill="#333"><circle cy="-8" r="4"/><path d="M-18 3.500h8v7.500h-8zM-4 5.500h8V13h-8zM10 3.500h8V11h-8z"/></g></g>
      <g transform="translate(954.400 411.300)"><use href="#arcl"/><use href="#dash"/><circle r="30" fill="url(#gr)"/><path d="M-15-10V-15.500L-1-18 13-15.500V12M-1-20.500V-8M-1 18V3L13 .500l5 .800" fill="none" stroke="#777" stroke-width="1.700"/><g fill="#333"><path d="M-20.500-11.500h10v8h-10zM-5-10h9v8.500h-9zM9 9.500h9V18H9z"/><circle cx="13" cy="-8.300" r="4.500"/><circle cx="-1" cy="10.300" r="4.500"/></g></g>
      <g fill="#fff" font-size="12" text-anchor="middle">
        <text x="456.500" y="268.500" textLength="19" lengthAdjust="spacingAndGlyphs">File</text>
        <text x="648" y="199" textLength="60" lengthAdjust="spacingAndGlyphs">Data Table</text>
        <text x="652" y="324.500" textLength="95" lengthAdjust="spacingAndGlyphs">Feature Statistics</text>
        <text x="645.500" y="452.500" textLength="64" lengthAdjust="spacingAndGlyphs">Scatter Plot</text>
        <text x="848" y="253.500" textLength="25" lengthAdjust="spacingAndGlyphs">Tree</text>
        <text x="954.400" y="469.500" textLength="66" lengthAdjust="spacingAndGlyphs">Tree Viewer</text>
      </g>
      <g fill="#eee" font-size="9.700" text-anchor="middle">
        <text transform="translate(545 161) rotate(-45)" textLength="20">Data</text>
        <text transform="translate(651.500 191.500)" textLength="20">Data</text>
        <text transform="translate(558.500 236) rotate(46)" textLength="20">Data</text>
        <text transform="translate(555.500 309) rotate(80)" textLength="20">Data</text>
        <text transform="translate(893.500 301) rotate(-77)" textLength="62">Model → Tree</text>
      </g>
    </svg>
  </div>
</div>

<!-- Tree Viewer window -->
<div class="tree-shadow"></div>
<div class="win-tree">
  <div class="win-title d-flex align-items-center">
    <svg width="18" height="18" viewBox="-21 -21 42 42" style="margin:-2px 0 0 9px"><path d="M-15-10V-15.500L-1-18 13-15.500V12M-1-20.500V-8M-1 18V3L13 .500l5 .800" fill="none" stroke="#c5c0c0" stroke-width="3"/><g fill="#d0caca"><path d="M-20.500-11.500h10v8h-10zM-5-10h9v8.500h-9zM9 9.500h9V18H9z"/><circle cx="13" cy="-8.300" r="4.500"/><circle cx="-1" cy="10.300" r="4.500"/></g></svg>
    <span data-fit="139" style="margin:-1px 0 0 8px">Tree Viewer - Orange</span>
    <svg class="ms-auto" width="150" height="20" viewBox="0 0 150 20" style="margin-top:-1px" fill="none" stroke="#111" stroke-width="1.200"><path d="M1 9.500h12M118.500 4l11 11M129.500 4l-11 11"/><rect x="59.500" y="4.500" width="11" height="11" rx="1"/></svg>
  </div>
  <div class="d-flex" style="height:580px">
    <div class="ctl" style="padding-top:5px">
      <div class="lbl"><span data-fit="24.500">Tree</span></div>
      <div class="gbox" style="height:30px;margin-top:4px;line-height:24px"><span data-fit="96">9 nodes, 5 leaves</span></div>
      <div class="lbl" style="margin-top:5px"><span data-fit="39">Display</span></div>
      <div class="gbox" style="height:198px;margin-top:4px">
        <div class="frow" style="height:27px"><span><span data-fit="34">Zoom:</span></span><div class="sldr"><i style="width:51px"></i><b></b><em></em></div></div>
        <div class="frow" style="height:26px"><span><span data-fit="36">Width:</span></span><div class="sldr"><i style="width:77px"></i><b></b><em></em></div></div>
        <div class="frow" style="height:35px"><span><span data-fit="36">Depth:</span></span><div class="cmb" style="height:25px"><span data-fit="51">Unlimited</span><i class="tri"></i></div></div>
        <div class="frow" style="height:35px"><span><span data-fit="64">Edge width:</span></span><div class="cmb" style="height:25px"><span data-fit="97">Relative to parent</span><i class="tri"></i></div></div>
        <div class="frow" style="height:37px"><span style="margin-top:-2px"><span data-fit="69">Target class:</span></span><div class="cmb" style="height:29px;background:linear-gradient(90deg,#1f1f1f 107px,#555 107px,#3c3c3c 109px);border-color:#242424"><span data-fit="28">None</span><i class="tri"></i></div></div>
        <div class="frow" style="height:31px;margin-left:39px"><div class="chk"></div><div data-fit="146" style="margin-left:6px">Show details in non-leaves</div></div>
      </div>
      <svg width="12" height="18" viewBox="0 0 12 18" style="margin:-4px 0 0 239px"><path d="M2 2l8 7-8 7" fill="none" stroke="#aaa" stroke-width="3"/></svg>
    </div>
    <div style="padding-top:9px">
      <svg id="treesvg" width="1065" height="554" viewBox="1045 613 1065 554" style="background:#1f1f1f" font-family="DejaVu Sans Condensed, DejaVu Sans, sans-serif" font-stretch="condensed" font-size="20"></svg>
      <div class="hbar"><div class="hb"><svg width="5" height="10"><path d="M5 0v10L0 5z" fill="#ccc"/></svg></div><div class="hthumb"></div><div class="hb ms-auto"><svg width="5" height="10"><path d="M0 0v10l5-5z" fill="#ccc"/></svg></div></div>
    </div>
  </div>
  <svg width="290" height="28" viewBox="780 1184 290 28" fill="none" stroke="#eee" stroke-width="1.700"><path d="M795 1203h16M795 1209h16" stroke-width="2.400"/><path d="M826 1205q0-4.500 5-4.500t5 3.500q0 2.500-2.500 3.500t-2.500 3v2" stroke-width="2.800"/><path d="M853 1213v-12h11l3 3v9M857 1201v4h6v-4M856 1213v-4h8v4M883 1213v-12h8l4 4v8M891 1201v4h4M886 1206h4M886 1209h6M886 1212h6"/><path d="M930 1203v-2h13v12M928 1208h10M935 1204l4 4-4 4M989 1203v-2h-12v12M981 1208h10M987 1204l4 4-4 4"/><text x="951" y="1213" font-size="12" fill="#ddd" stroke="none" font-family="DejaVu Sans Condensed">M</text><path d="M951 1203.500h10" stroke-width="1"/><text x="999" y="1213" font-size="14" fill="#eee" stroke="none" textLength="42" lengthAdjust="spacingAndGlyphs" font-family="DejaVu Sans Condensed, DejaVu Sans">- | 150</text></svg>
</div>

<!-- Taskbar -->
<div class="tbar d-flex">
  <div class="d-flex" style="margin-left:-5px">
    <div class="tcell"><svg viewBox="0 0 50 50"><path fill="#41a5ee" d="M17 11h22v7H17z"/><path fill="#2b7cd3" d="M17 18h22v7H17z"/><path fill="#185abd" d="M17 25h22v7H17z"/><path fill="#103f91" d="M17 32h22v6H17z"/><rect x="10" y="17" width="15" height="15" rx="1.500" fill="#1a56b4"/><text x="17.500" y="28.500" font-size="11" font-weight="700" fill="#fff" text-anchor="middle">W</text></svg></div>
    <div class="tcell on"><svg viewBox="0 0 50 50"><path fill="#21a366" d="M17 11h11v14H17z"/><path fill="#33c481" d="M28 11h11v7H28z"/><path fill="#107c41" d="M28 18h11v14H28z"/><path fill="#185c37" d="M17 25h11v13H17zM28 32h11v6H28z"/><rect x="10" y="17" width="15" height="15" rx="1.500" fill="#107c41"/><text x="17.500" y="28.500" font-size="11" font-weight="700" fill="#fff" text-anchor="middle">X</text></svg></div>
    <div class="tcell on"><svg viewBox="0 0 50 50"><path fill="#0b7dc8" d="M32 10L17 23l-5-4-2 2 4.500 4L10 29l2 2 5-3.500L32 39V31l-9-6 9-7z"/><path fill="#2aaaf2" d="M31 10l8 4v21l-8 4z"/></svg></div>
    <div class="tcell"><svg viewBox="0 0 50 50"><path fill="#f3f3ea" d="M12 13h23l-1 25H13z"/><path fill="#7bd93a" d="M14 24q9-6 16-2l3 4-1 11H15z"/><path d="M16 27q7-6 13 0t-12 5M20 33h9" stroke="#1d6b17" stroke-width="1.600" fill="none"/><circle cx="26" cy="20" r="2.600" fill="#fff" stroke="#666"/><path d="M13 13h21" stroke="#999" stroke-width="3" stroke-dasharray="2 1"/><path d="M38 11l-7 19" stroke="#e8a020" stroke-width="2.600"/></svg></div>
    <div class="tcell on"><svg viewBox="0 0 50 50"><circle cx="25" cy="25" r="15" fill="#1473c6"/><path fill="#35c1d8" d="M10 23a15 15 0 0130 0q0 8-9 8-5 0-5-4 2-3-2-7-6-4-14 3z"/><path fill="#5cdc8a" d="M28 10.500a15 15 0 0112 14q-1 7-9 6.500-5-1-5-4 8-4 2-16z"/><path d="M24 27q1 9 10 9l4-4q-8 2-14-5z" fill="#202226"/><circle cx="18" cy="32" r="7" fill="#ddd7cc"/><path d="M12 35q6-3 12 0a7 7 0 01-12 0z" fill="#f2d31f"/><circle cx="18.500" cy="30.500" r="3" fill="#8a5f48"/></svg></div>
    <div class="tcell on"><svg viewBox="0 0 50 50"><rect x="11" y="10" width="28" height="29" rx="6" fill="#1468d3"/><path d="M25 15h7M29 15v13q0 6-5 6t-5-4.500 5-4" fill="none" stroke="#fff" stroke-width="4.600"/></svg></div>
    <div class="tcell"><svg viewBox="0 0 50 50"><path d="M25 12L10 38h30z" fill="#f2d500"/><path d="M25 21l-7 13h13z" fill="#202122"/><path d="M24 15l-9 22M22 18l-6 19M27 18l9 19M29 22l9 15M12 36h24M13 34h22" stroke="#202122" stroke-width=".8"/></svg></div>
    <div class="tcell"><svg viewBox="0 0 50 50"><g id="orange" transform="translate(9 8)"><path d="M16 6Q5 6 3.500 15q0 8 4 12 4 4 8.500 4t8.500-4q4-4 4-12Q27 6 16 6z" fill="#ed6a23"/><path d="M15 8l-4-5 5 1 3-3v4l4-1-5 5z" fill="#35a853"/><circle cx="8.500" cy="14" r="5.500" fill="#fbe3d0" stroke="#3f2b22" stroke-width="1.700"/><circle cx="23.500" cy="14" r="5.500" fill="#fbe3d0" stroke="#3f2b22" stroke-width="1.700"/><path d="M14 13.500q2-1.500 4 0" fill="none" stroke="#3f2b22" stroke-width="1.500"/><circle cx="10" cy="14.500" r="2" fill="#333"/><circle cx="22" cy="14.500" r="2" fill="#333"/><path d="M8 22q8 3 16 0-2 7-8 7t-8-7z" fill="#8c1a1a"/><path d="M9 22.500q7 3 14 0l-1 2q-6 2-12 0z" fill="#fff"/></g></svg></div>
    <div class="tcell"><svg viewBox="0 0 50 50"><rect x="10" y="10" width="30" height="30" rx="6" fill="#fff"/><path d="M13 21q0-7 7-8h4q-1 8-11 11z" fill="#6b35ff"/><path d="M27 12q10 0 10 10v2q-9-2-10-12z" fill="#13b5ff"/><path d="M13 27q10 1 11 10h-2q-9 0-9-8z" fill="#ff0a50"/><path d="M37 27q0 10-9 10h-2q1-9 11-10z" fill="#ffb400"/></svg></div>
    <div class="tcell"><svg viewBox="0 0 50 50"><rect x="10" y="10" width="30" height="30" fill="#f08705"/><path d="M24 24l16 16H28l-13-6z" fill="#df6c0c"/><path d="M25 20l-8 13M25 20l8 13" stroke="#fff" stroke-width="2.200"/><path fill="#fff" d="M20 14h10v9H20zM13 28h9v8h-9zM28 28h9v8h-9z"/></svg></div>
    <div class="tcell"><svg viewBox="0 0 50 50"><circle cx="25" cy="24.500" r="14" fill="#ed6c47"/><path fill="#ff8f6b" d="M25 10.500a14 14 0 0114 14H25z"/><path fill="#d35230" d="M39 24.500a14 14 0 01-28 0z"/><rect x="10" y="17" width="15" height="15" rx="1.500" fill="#c43e1c"/><text x="17.500" y="28.500" font-size="11" font-weight="700" fill="#fff" text-anchor="middle">P</text></svg></div>
    <div class="tcell on"><svg viewBox="0 0 50 50"><path fill="#1490df" d="M14 13q7-5 18 0v17h6v6H10v-6h4z"/><path fill="#0f6fb8" d="M14 22h18v8H14zM19 36h11v3H19z"/><circle cx="35.500" cy="14" r="12" fill="#1493ff"/><text x="35.500" y="19" font-size="14" fill="#111" text-anchor="middle" textLength="15">47</text></svg></div>
    <div class="tcell on"><svg viewBox="0 0 50 50"><path fill="#1c6fc8" d="M17 13h22v17H17z"/><path fill="#1450a0" d="M25 22l14 10V18z"/><path fill="#41a5ee" d="M16 30l9-6 14 8v6H18z"/><rect x="10" y="17" width="15" height="15" rx="1.500" fill="#0f62bd"/><text x="17.500" y="29" font-size="12" font-weight="700" fill="#fff" text-anchor="middle">O</text><circle cx="36" cy="14" r="10" fill="#60c8ff"/><path d="M30 9.500h12v9H30zM30 10l6 5 6-5" fill="none" stroke="#111" stroke-width="1.300"/><rect x="19" y="31" width="21" height="9" rx="2" fill="#2fe5e0"/><text x="29.500" y="38.500" font-size="8" font-weight="700" fill="#111" text-anchor="middle">NEW</text></svg></div>
    <div class="tcell on red"><svg viewBox="0 0 50 50"><circle cx="25" cy="25" r="13.500" fill="#279fda"/><path fill="#fff" d="M17 25l15-6-3 13-5-3-2 3-1-5z"/><rect x="27" y="10" width="19" height="14" rx="4" fill="#e93b36"/><text x="36.500" y="21" font-size="11" fill="#fff" text-anchor="middle">..17</text></svg></div>
    <div class="tcell on"><svg viewBox="0 0 50 50"><circle cx="25" cy="25" r="14.500" fill="#1ed760"/><path d="M16 20q10-3 18 2M17 25q9-2.500 16 2M18 30q8-2 13 1.500" fill="none" stroke="#161616" stroke-width="2.500" stroke-linecap="round"/></svg></div>
    <div class="tcell on"><svg viewBox="0 0 50 50"><path d="M12 38l2-7a13 13 0 114 5z" fill="none" stroke="#25d366" stroke-width="2.800"/><path d="M20 18q-3 3 2 8t9 4q3-1 2-4l-4-1-1.500 2q-3-1-5-5l1.500-1.500-1.500-3z" fill="#25d366"/></svg></div>
    <div class="tcell on"><svg viewBox="0 0 50 50"><path fill="#e8a60c" d="M10 12h11l3 3h10v8H10z"/><path fill="#ffcf48" d="M10 18q7 0 10-2h20v22H10z"/><path fill="#1278d0" d="M16 31h18q2 0 2 3v4H15v-4q0-3 1-3z"/><path d="M18 34.500h14" stroke="#0b4f99"/></svg></div>
    <div class="tcell on act"><svg viewBox="0 0 50 50"><use href="#orange"/></svg></div>
  </div>
  <div class="ms-auto d-flex align-items-center">
    <svg width="130" height="40" viewBox="1860 1222 130 40" fill="none" stroke="#fff" stroke-width="1.600"><path d="M1865 1245l5-6 5 6"/><path d="M1901 1239q9-9 18 0M1904 1243q6-6 12 0M1907 1246q3-3 6 0"/><circle cx="1910" cy="1248.500" r="1.500" fill="#fff"/><path d="M1930.500 1239h3l4-4v13l-4-4h-3zM1940 1238q3 3 0 7M1943 1236q5 5.500 0 11M1946 1234q6 7.500 0 15" stroke-width="1.400"/><rect x="1961" y="1235" width="16" height="12" rx="2.500"/><path d="M1966 1237.500h9v7h-11zM1978.500 1238.500v5" fill="#fff"/><path d="M1963 1229l-3.500 7h3l-1 5 4-7h-3z" fill="#fff" stroke="#202020" stroke-width=".8"/></svg>
    <div class="clock" style="width:88px"><span data-fit="36">03:19</span><br><span data-fit="77">13/03/2024</span></div>
    <svg width="37" height="24" viewBox="0 0 37 24"><path d="M11.500 16q2-2 2-7a6 6 0 0112 0q0 5 2 7v2h-16zM16 19h7q-1 3-3.500 3T16 19z" fill="#2ea0ff"/></svg>
  </div>
</div>
<div class="tray-tip"><span data-fit="514">Luiz Augusto de Souza Perciliano (luiz.perciliano@cvm.gov.br) está conectado</span></div>

<script src="https://cdn.jsdelivr.net/npm/bootstrap@5.3.0/dist/js/bootstrap.bundle.min.js"></script>
<script>
// Decision tree: x, y, fill, title, optional second line, pie slices [fraction, colour]
const R='#f0452e',G='#a8f22b',B='#46bdfb';
const nodes=[
 {x:1366,y:658,f:'#fff',t:'petal length',w:106,p:[[.333,B],[.333,R],[.334,G]]},
 {x:1069.5,y:742,f:'#46befe',t:'Iris-setosa',w:109,s:'100%, 50/50',sw:117,l:'≤ 1.9',lx:1104,p:[[1,B]]},
 {x:1662.5,y:742,f:'#fff',t:'petal width',w:98,l:'> 1.9',lx:1759,p:[[.5,R],[.5,G]]},
 {x:1430.5,y:826,f:'#ff6149',t:'petal length',w:106,l:'≤ 1.7',lx:1465,p:[[.907,R],[.093,G]]},
 {x:1895,y:826,f:'#aeff2c',t:'Iris-virginica',w:131,s:'97.8%, 45/46',sw:124,l:'> 1.7',lx:1991,p:[[1,G]]},
 {x:1275.5,y:909.7,f:'#f74a31',t:'Iris-versicolor',w:143,s:'97.9%, 47/48',sw:124,l:'≤ 4.9',lx:1310,p:[[.966,R],[.034,G]]},
 {x:1585.5,y:910,f:'#e8ffbd',t:'petal width',w:98,l:'> 4.9',lx:1682,p:[[.333,R],[.667,G]]},
 {x:1482,y:993.7,f:'#aaf22a',t:'Iris-virginica',w:131,s:'100%, 3/3',sw:96,l:'≤ 1.5',lx:1516,p:[[1,G]]},
 {x:1688.5,y:993.7,f:'#ffc4bd',t:'Iris-versicolor',w:143,s:'66.7%, 2/3',sw:101,l:'> 1.5',lx:1785,p:[[.667,R],[.333,G]]}
];
const edges=[[0,1,4.500],[0,2,9],[2,3,6.500],[2,4,5.500],[3,5,11],[3,6,1.300],[6,7,5.500],[6,8,5.500]];
let out='';
for(const [a,b,w] of edges){const n=nodes[a],m=nodes[b];
 out+=`<path d="M${n.x+89} ${n.y+50.5}L${m.x+88} ${m.y}" stroke="#a09fa4" stroke-width="${w}" stroke-linecap="round"/>`}
for(const n of nodes){const h=n.s?73:42.5;
 out+=`<rect x="${n.x}" y="${n.y}" width="174" height="${h}" rx="${n.s?6:0}" fill="${n.f}" stroke="#808080" stroke-width="1.5"/>`;
 const T=(x,y,t,w,c,b)=>`<text x="${x}" y="${y}" fill="${c}" textLength="${w}" lengthAdjust="spacingAndGlyphs"${b?' font-weight="700"':''}>${t}</text>`;
 out+=T(n.x+11,n.y+26.5,n.t,n.w,'#000',!!n.s);
 if(n.s)out+=T(n.x+11.5,n.y+56.5,n.s,n.sw,'#000');
 if(n.l)out+=T(n.lx,n.y-6.3,n.l.replace('>','&gt;'),48,'#fff');
 if(!n.s)out+=`<circle cx="${n.x+89}" cy="${n.y+50.5}" r="7.800" fill="#a09fa4" stroke="#fff" stroke-width="1.500"/>`;
 const cx=n.x+173.500,cy=n.y+(n.s?36.3:21.3),r=12.3;let a=0;
 for(const [v,c] of n.p){
  if(v===1)out+=`<circle cx="${cx}" cy="${cy}" r="${r}" fill="${c}"/>`;
  else{const e=a+v*2*Math.PI;out+=`<path d="M${cx} ${cy}L${cx+r*Math.cos(a)} ${cy-r*Math.sin(a)}A${r} ${r} 0 ${v>.5?1:0} 0 ${cx+r*Math.cos(e)} ${cy-r*Math.sin(e)}z" fill="${c}"/>`;a=e}}
 out+=`<circle cx="${cx}" cy="${cy}" r="${r}" fill="none" stroke="#111" stroke-width="1.400"/>`;
}
document.getElementById('treesvg').innerHTML=out;
// Tune letter spacing so each label fills its allotted width
document.querySelectorAll('[data-fit]').forEach(e=>{
 const n=e.textContent.length,w=e.getBoundingClientRect().width,d=(+e.dataset.fit-w)/n;
 e.style.letterSpacing=d.toFixed(3)+'px';
});
</script>
</body>
</html>
